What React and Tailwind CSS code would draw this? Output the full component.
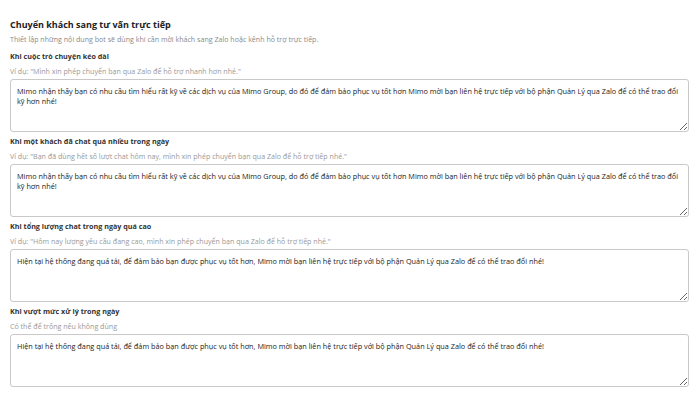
const sections = [
  {
    label: "Khi cuộc trò chuyện kéo dài",
    hint: "Ví dụ: \"Mình xin phép chuyển bạn qua Zalo để hỗ trợ nhanh hơn nhé.\"",
    value:
      "Mimo nhận thấy bạn có nhu cầu tìm hiểu rất kỹ về các dịch vụ của Mimo Group, do đó để đảm bảo phục vụ tốt hơn Mimo mời bạn liên hệ trực tiếp với bộ phận Quản Lý qua Zalo để có thể trao đổi kỹ hơn nhé!",
  },
  {
    label: "Khi một khách đã chat quá nhiều trong ngày",
    hint: "Ví dụ: \"Bạn đã dùng hết số lượt chat hôm nay, mình xin phép chuyển bạn qua Zalo để hỗ trợ tiếp nhé.\"",
    value:
      "Mimo nhận thấy bạn có nhu cầu tìm hiểu rất kỹ về các dịch vụ của Mimo Group, do đó để đảm bảo phục vụ tốt hơn Mimo mời bạn liên hệ trực tiếp với bộ phận Quản Lý qua Zalo để có thể trao đổi kỹ hơn nhé!",
  },
  {
    label: "Khi tổng lượng chat trong ngày quá cao",
    hint: "Ví dụ: \"Hôm nay lượng yêu cầu đang cao, mình xin phép chuyển bạn qua Zalo để hỗ trợ tiếp nhé.\"",
    value:
      "Hiện tại hệ thống đang quá tải, để đảm bảo bạn được phục vụ tốt hơn, Mimo mời bạn liên hệ trực tiếp với bộ phận Quản Lý qua Zalo để có thể trao đổi nhé!",
  },
  {
    label: "Khi vượt mức xử lý trong ngày",
    hint: "Có thể để trống nếu không dùng",
    value:
      "Hiện tại hệ thống đang quá tải, để đảm bảo bạn được phục vụ tốt hơn, Mimo mời bạn liên hệ trực tiếp với bộ phận Quản Lý qua Zalo để có thể trao đổi nhé!",
  },
];

export default function App() {
  return (
    <div
      className="w-[700px] h-[411px] bg-white px-[10px] pt-[19px] overflow-hidden"
      style={{ fontFamily: "'Open Sans', 'Noto Sans', sans-serif" }}
    >
      <h2 className="text-[9px] leading-[12px] font-bold text-[#222]">
        Chuyển khách sang tư vấn trực tiếp
      </h2>
      <p className="mt-[3px] text-[7.1px] leading-[10px] text-[#8a8a8a]">
        Thiết lập những nội dung bot sẽ dùng khi cần mời khách sang Zalo hoặc kênh hỗ trợ trực tiếp.
      </p>

      <div className="flex flex-col gap-[4px] pt-[7px]">
        {sections.map((s) => (
          <div key={s.label} className="flex flex-col">
            <label className="text-[7.2px] leading-[10px] font-bold text-[#333]">{s.label}</label>
            <p className="mt-[5px] text-[7.1px] leading-[10px] text-[#999]">{s.hint}</p>
            <textarea
              defaultValue={s.value}
              className="block mt-[3px] w-[679px] h-[53px] rounded-[3px] border border-[#c9c9c9] px-[6px] py-[6px] text-[7.3px] leading-[10px] text-[#222] outline-none"
              style={{ fontFamily: "inherit" }}
            />
          </div>
        ))}
      </div>
    </div>
  );
}
